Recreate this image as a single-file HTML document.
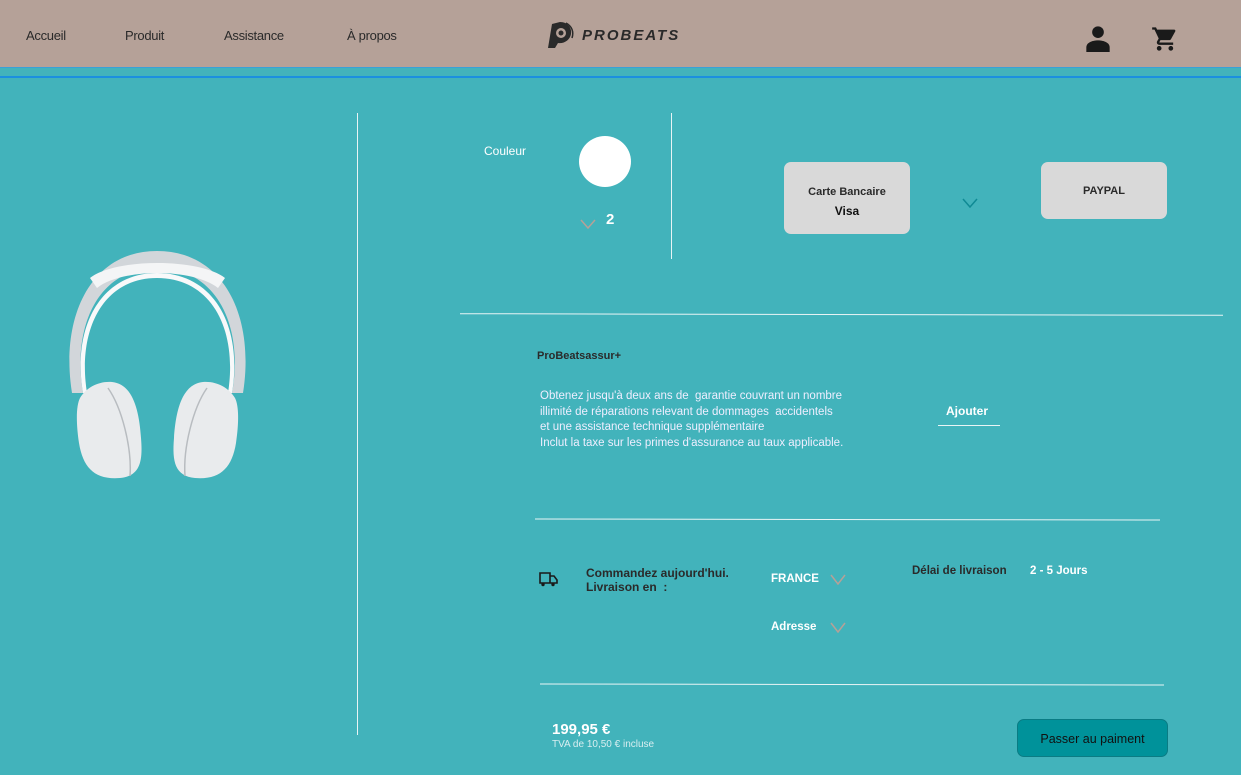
<!DOCTYPE html>
<html><head><meta charset="utf-8"><style>
*{margin:0;padding:0;box-sizing:border-box}
body{width:1241px;height:775px;overflow:hidden;background:#42b3bb;font-family:"Liberation Sans",sans-serif;position:relative}
.a{position:absolute;white-space:nowrap}
.hdr{position:absolute;left:0;top:0;width:1241px;height:68px;background:#b5a198;border-bottom:1px solid #3aa0d8}
.nav{top:28px;font-size:13px;color:#2a2a2a;letter-spacing:-0.3px}
.w{color:#fff}
.b{font-weight:bold}
.line{position:absolute;background:#e8f4f5;height:1px}
.btn{position:absolute;background:#d9d9d9;border-radius:7px;text-align:center;font-weight:bold;color:#2a2a2a;font-size:11px}
</style></head><body>
<div class="hdr"></div>
<div class="a" style="left:0;top:76px;width:1241px;height:2px;background:#1b8fe0"></div>
<div class="a nav" style="left:26px">Accueil</div>
<div class="a nav" style="left:125px">Produit</div>
<div class="a nav" style="left:224px">Assistance</div>
<div class="a nav" style="left:347px">À propos</div>
<svg class="a" style="left:546px;top:20px" width="32" height="30" viewBox="0 0 32 30"><path d="M6 4 L14 2 C22 2 26 8 25 14 C24 20 18 24 12 23 L9 28 L2 28 Z" fill="#2a2a2a"/><circle cx="15" cy="13" r="5" fill="#b5a198"/><circle cx="15" cy="13" r="2.5" fill="#2a2a2a"/><path d="M20 3 C26 6 28 12 26 18" stroke="#2a2a2a" stroke-width="1.5" fill="none"/></svg>
<div class="a" style="left:582px;top:27px;font-size:15px;font-weight:bold;font-style:italic;letter-spacing:2px;color:#2a2a2a">PROBEATS</div>
<svg class="a" style="left:1084px;top:24px" width="28" height="28" viewBox="0 0 24 24"><circle cx="12" cy="7" r="5" fill="#1a1a1a"/><path d="M2 24 V20 C2 16 7 14 12 14 C17 14 22 16 22 20 V24Z" fill="#1a1a1a"/></svg>
<svg class="a" style="left:1151px;top:25px" width="28" height="28" viewBox="0 0 24 24"><path fill="#1a1a1a" d="M7 18c-1.1 0-2 .9-2 2s.9 2 2 2 2-.9 2-2-.9-2-2-2zM1 2v2h2l3.6 7.6-1.4 2.4c-.1.3-.2.6-.2 1 0 1.1.9 2 2 2h12v-2H7.4c-.1 0-.2-.1-.2-.2v-.1l.9-1.7h7.4c.8 0 1.4-.4 1.7-1l3.6-6.5c.1-.2.1-.3.1-.5 0-.6-.4-1-1-1H5.2l-.9-2H1zm16 16c-1.1 0-2 .9-2 2s.9 2 2 2 2-.9 2-2-.9-2-2-2z"/></svg>

<!-- headphones -->
<svg class="a" style="left:60px;top:248px" width="195" height="235" viewBox="0 0 195 235">
<path d="M12 145 C0 70 30 3 97 3 C165 3 195 70 183 145 L172 145 C184 80 158 20 97 20 C37 20 12 80 23 145Z" fill="#d2d6da"/>
<path d="M30 30 C55 10 140 10 165 30 L158 40 C133 20 62 20 37 40Z" fill="#f4f5f6"/>
<path d="M23 145 C12 80 40 25 97 25 C155 25 183 80 172 145 L168 145 C178 82 152 30 97 30 C43 30 17 82 27 145Z" fill="#f8f9fa"/>
<path d="M20 150 C16 158 16 175 19 195 C23 220 35 232 60 230 C80 228 83 214 81 190 C79 160 72 136 52 134 C38 133 26 140 20 150Z" fill="#e9ebed"/>
<path d="M175 150 C179 158 179 175 176 195 C172 220 160 232 135 230 C115 228 112 214 114 190 C116 160 123 136 143 134 C157 133 169 140 175 150Z" fill="#e9ebed"/>
<path d="M48 140 C62 160 72 200 70 228" stroke="#b8bcc0" stroke-width="1.5" fill="none"/>
<path d="M147 140 C133 160 123 200 125 228" stroke="#b8bcc0" stroke-width="1.5" fill="none"/>
</svg>

<div class="a" style="left:357px;top:113px;width:1px;height:622px;background:#e8f4f5"></div>
<div class="a" style="left:671px;top:113px;width:1px;height:146px;background:#e8f4f5"></div>

<div class="a w" style="left:484px;top:144px;font-size:12px">Couleur</div>
<div class="a" style="left:579px;top:136px;width:52px;height:51px;border-radius:50%;background:#fff"></div>
<svg class="a" style="left:580px;top:219px" width="16" height="10"><path d="M1 1 L8 9 L15 1" stroke="#b5a198" stroke-width="1.5" fill="none"/></svg>
<div class="a w b" style="left:606px;top:211px;font-size:15px">2</div>

<div class="btn" style="left:784px;top:162px;width:126px;height:72px;padding-top:21px;line-height:19px">Carte Bancaire<br><span style="font-size:12px;color:#111">Visa</span></div>
<svg class="a" style="left:962px;top:198px" width="16" height="10"><path d="M1 1 L8 9 L15 1" stroke="#0f8a94" stroke-width="1.5" fill="none"/></svg>
<div class="btn" style="left:1041px;top:162px;width:126px;height:57px;padding-top:23px">PAYPAL</div>

<div class="line" style="left:460px;top:314px;width:763px;transform:rotate(0.12deg)"></div>

<div class="a b" style="left:537px;top:350px;font-size:11px;color:#2a2a2a">ProBeatsassur+</div>
<div class="a w" style="left:540px;top:389px;font-size:11.5px;line-height:15.5px;color:#eef">Obtenez jusqu'à deux ans de &nbsp;garantie couvrant un nombre<br>illimité de réparations relevant de dommages &nbsp;accidentels<br>et une assistance technique supplémentaire<br>Inclut la taxe sur les primes d'assurance au taux applicable.</div>
<div class="a w b" style="left:946px;top:404px;font-size:12px">Ajouter</div>
<div class="a" style="left:938px;top:425px;width:62px;height:1px;background:#e8f4f5"></div>

<div class="line" style="left:535px;top:519px;width:625px;transform:rotate(0.1deg)"></div>

<svg class="a" style="left:539px;top:571px" width="19" height="16" viewBox="0 0 19 16"><path d="M1 2 H11 V12 H1Z M11 5 H15 L18 9 V12 H11" stroke="#1a1a1a" stroke-width="1.6" fill="none"/><circle cx="4" cy="13.5" r="1.7" fill="#1a1a1a"/><circle cx="14" cy="13.5" r="1.7" fill="#1a1a1a"/></svg>
<div class="a b" style="left:586px;top:566px;font-size:12px;line-height:14px;color:#2a2a2a">Commandez aujourd'hui.<br>Livraison en &nbsp;:</div>
<div class="a w b" style="left:771px;top:573px;font-size:11.5px">FRANCE</div>
<svg class="a" style="left:830px;top:574px" width="16" height="11"><path d="M1 1 L8 10 L15 1" stroke="#b5a198" stroke-width="1.5" fill="none"/></svg>
<div class="a w b" style="left:771px;top:621px;font-size:11.5px">Adresse</div>
<svg class="a" style="left:830px;top:622px" width="16" height="11"><path d="M1 1 L8 10 L15 1" stroke="#b5a198" stroke-width="1.5" fill="none"/></svg>
<div class="a b" style="left:912px;top:565px;font-size:11.5px;color:#2a2a2a">Délai de livraison</div>
<div class="a w b" style="left:1030px;top:565px;font-size:11.5px">2 - 5 Jours</div>

<div class="line" style="left:540px;top:684px;width:624px;transform:rotate(0.1deg)"></div>

<div class="a w b" style="left:552px;top:721px;font-size:15px">199,95 €</div>
<div class="a" style="left:552px;top:739px;font-size:10px;color:#d8eef0">TVA de 10,50 € incluse</div>
<div class="a" style="left:1017px;top:719px;width:151px;height:38px;background:#00929a;border-radius:7px;border:1px solid #0a7c84;text-align:center;line-height:38px;font-size:12.5px;color:#111">Passer au paiment</div>
</body></html>
